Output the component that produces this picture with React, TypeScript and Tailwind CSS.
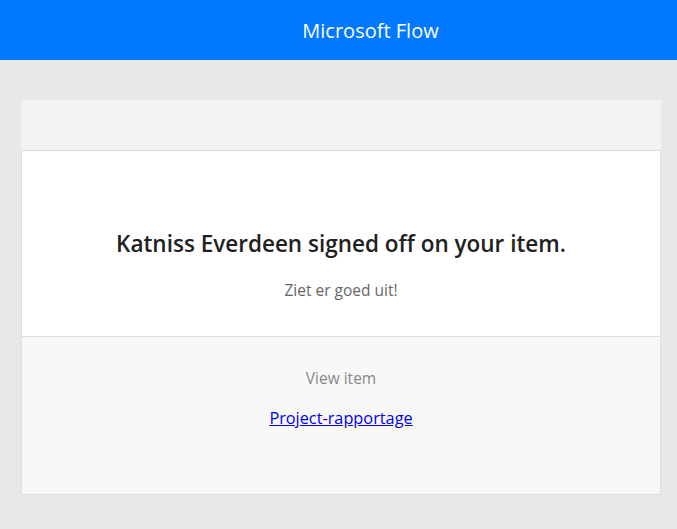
import React from 'react';

const App: React.FC = () => {
  return (
    <div className="min-h-screen bg-[#e8e8e8] font-['Segoe_UI','Open_Sans',sans-serif]">
      <header className="h-[60px] bg-[#0078ff] flex items-center justify-center pl-[64px] pt-[2px]">
        <span className="text-white text-[20px]">Microsoft Flow</span>
      </header>

      <main className="pt-[40px] pl-[21px] pr-[16px] pb-[34px]">
        <div className="w-[640px]">
          <div className="h-[50px] bg-[#f2f2f2]" />

          <section className="h-[187px] bg-white border border-[#dddddd] flex flex-col items-center pt-[77px]">
            <h1 className="text-[22.5px] font-semibold text-[#212121] leading-[32px]">
              Katniss Everdeen signed off on your item.
            </h1>
            <p className="mt-[19px] text-[15.5px] text-[#666666] leading-[22px]">Ziet er goed uit!</p>
          </section>

          <section className="h-[158px] bg-[#f8f8f8] border-x border-b border-[#dddddd] flex flex-col items-center pt-[30px]">
            <p className="text-[15.5px] text-[#888888] leading-[22px]">View item</p>
            <a href="#" className="mt-[18px] text-[16.3px] text-[#0000ee] underline leading-[22px]">
              Project-rapportage
            </a>
          </section>
        </div>
      </main>
    </div>
  );
};

export default App;
